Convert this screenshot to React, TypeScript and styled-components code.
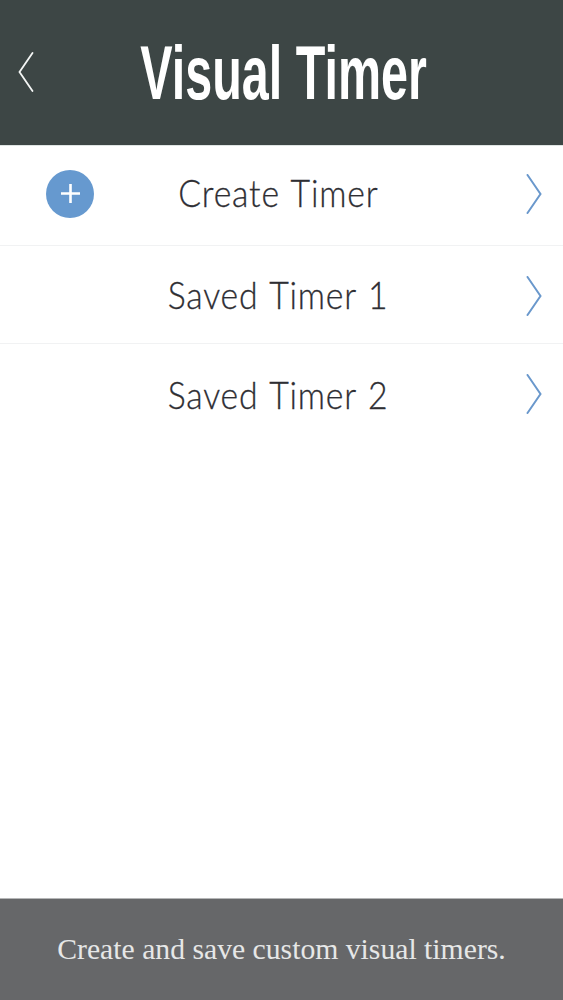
import React from 'react';
import styled, {createGlobalStyle} from "styled-components";

const rows = [
    {label: 'Create Timer', add: true, height: 100, pad: '0 0 4px', lift: 2},
    {label: 'Saved Timer 1', add: false, height: 98, pad: '2px 0 0', lift: 2},
    {label: 'Saved Timer 2', add: false, height: 100, pad: '0', lift: 0},
]

const Chevron = ({dir, color}: { dir: 'left' | 'right', color: string }) => (
    <svg width="16" height="40" viewBox="0 0 16 40" fill="none">
        <path
            d={dir === 'right' ? 'M1.5 1 L14.5 20 L1.5 39' : 'M14.5 1 L1.5 20 L14.5 39'}
            stroke={color}
            strokeWidth={dir === 'right' ? 2 : 1.8}
            strokeLinecap="round"
            strokeLinejoin="miter"
        />
    </svg>
)

const App = () => {
    return (
        <Page>
            <GlobalStyle/>
            <Header>
                <BackSlot>
                    <Chevron dir="left" color="#f4f6f5"/>
                </BackSlot>
                <Title>Visual Timer</Title>
            </Header>
            <List>
                {rows.map((r) => (
                    <Row key={r.label} $height={r.height} $pad={r.pad}>
                        <IconSlot>
                            {r.add && (
                                <AddButton>
                                    <svg width="19" height="19" viewBox="0 0 19 19">
                                        <path d="M9.5 0 V19 M0 9.5 H19" stroke="#fff" strokeWidth="2.6"/>
                                    </svg>
                                </AddButton>
                            )}
                        </IconSlot>
                        <RowLabel $lift={r.lift}>{r.label}</RowLabel>
                        <ArrowSlot>
                            <Chevron dir="right" color="#6a98cc"/>
                        </ArrowSlot>
                    </Row>
                ))}
            </List>
            <Footer>
                <FooterText>Create and save custom visual timers.</FooterText>
            </Footer>
        </Page>
    );
};

export default App;

const GlobalStyle = createGlobalStyle`
    html, body {
        margin: 0;
        padding: 0;
        background: #fff;
    }
`
const Page = styled.div`
    display: flex;
    flex-direction: column;
    height: 1000px;
    overflow: hidden;
    background: #fff;
`
const Header = styled.header`
    position: relative;
    display: flex;
    justify-content: center;
    align-items: center;
    height: 146px;
    box-sizing: border-box;
    flex-shrink: 0;
    background-color: #3d4645;
    border-bottom: 1px solid #dfe5e3;
`
const BackSlot = styled.a`
    position: absolute;
    left: 18px;
    top: 52px;
    display: flex;
`
const Title = styled.h1`
    margin: 0 0 0 4px;
    font-family: 'Liberation Sans', sans-serif;
    font-size: 76px;
    font-weight: 700;
    line-height: 1;
    color: #fff;
    white-space: nowrap;
    transform: scaleX(0.638);
`
const List = styled.ul`
    flex: 1;
    margin: 0;
    padding: 0;
    list-style: none;
`
const Row = styled.li<{ $height: number, $pad: string }>`
    display: grid;
    grid-template-columns: 1fr auto 1fr;
    align-items: center;
    box-sizing: border-box;
    height: ${(p) => p.$height}px;
    padding: ${(p) => p.$pad};
    border-bottom: 1px solid #f1f2f3;

    &:last-child {
        border-bottom: none;
    }
`
const IconSlot = styled.div`
    display: flex;
    padding-left: 46px;
`
const AddButton = styled.span`
    display: flex;
    justify-content: center;
    align-items: center;
    width: 48px;
    height: 48px;
    border-radius: 50%;
    background-color: #6699cf;
`
const RowLabel = styled.span<{ $lift: number }>`
    font-family: 'Lato', sans-serif;
    font-size: 38px;
    font-weight: 300;
    color: #2e2e33;
    -webkit-text-stroke: 0.3px #2e2e33;
    letter-spacing: 0.9px;
    word-spacing: 2px;
    white-space: nowrap;
    transform: translate(-3px, ${(p) => -p.$lift}px) scaleX(0.89);
`
const ArrowSlot = styled.a`
    display: flex;
    justify-content: flex-end;
    padding-right: 21px;
`
const Footer = styled.footer`
    display: flex;
    justify-content: center;
    align-items: center;
    box-sizing: border-box;
    height: 102px;
    flex-shrink: 0;
    background-color: #666769;
    border-top: 1px solid #b5b6b7;
`
const FooterText = styled.p`
    margin: 0;
    font-family: 'Liberation Serif', serif;
    font-size: 29.7px;
    color: #e6e7e7;
    white-space: nowrap;
`
